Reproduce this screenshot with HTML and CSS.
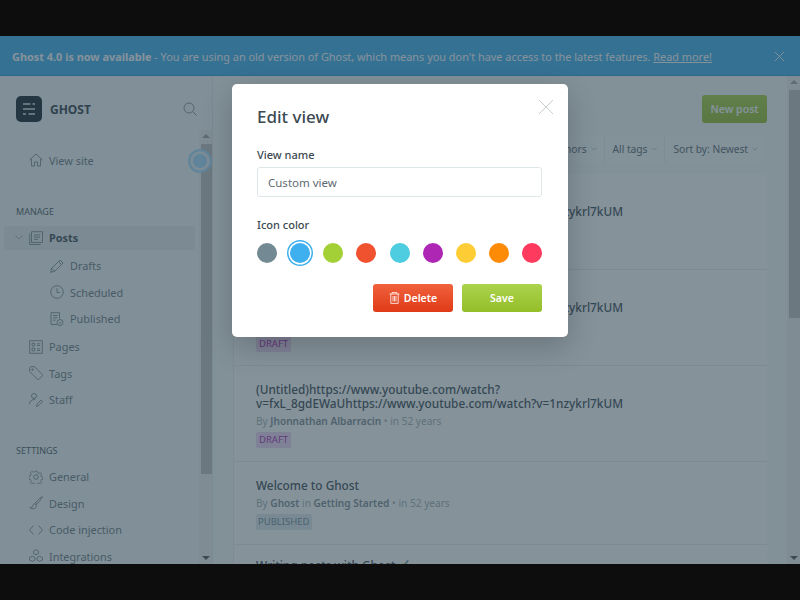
FILE: index.html
```html
<!DOCTYPE html>
<html lang="en">

<head>
    <meta charset="UTF-8">
    <meta name="viewport" content="width=device-width, initial-scale=1.0">
    <title>Edit view</title>
    <link rel="stylesheet" href="styles.css">
</head>

<body>
    <div class="app">
        <div class="banner">
            <p class="banner-text"><strong>Ghost 4.0 is now available</strong> - You are using an old version of Ghost, which means you don't have access to the latest features. <a href="#">Read more!</a></p>
            <svg class="banner-close" viewBox="0 0 12 12"><path d="M1 1l10 10M11 1L1 11"/></svg>
        </div>

        <div class="workspace">
            <aside class="sidebar">
                <div class="brand">
                    <div class="brand-logo">
                        <svg viewBox="0 0 26 26"><path d="M7 8h7.500M16.500 8h2.500M7 13h12M7 18h3M12.500 18h6.500"/></svg>
                    </div>
                    <span class="brand-name">GHOST</span>
                    <svg class="icon search" viewBox="0 0 14 14"><circle cx="6" cy="6" r="5"/><path d="M9.600 9.600L13.500 13.500"/></svg>
                </div>
                <div class="side-body">
                    <nav class="side-nav">
                        <a class="nav-item" href="#">
                            <svg class="icon" viewBox="0 0 14 14"><path d="M.5 7L7 1l6.500 6M2.500 6v7h3V9h3v4h3V6"/></svg>
                            View site
                        </a>
                        <h4 class="nav-title nav-title-manage">MANAGE</h4>
                        <a class="nav-item nav-active" href="#">
                            <svg class="chevron" viewBox="0 0 8 5"><path d="M.5.5L4 4 7.500.5"/></svg>
                            <svg class="icon" viewBox="0 0 14 14"><path d="M2.500.7h11v10.800h-11zM.7 2.500v11h11M5 4h6M5 6.200h6M5 8.400h4"/></svg>
                            Posts
                        </a>
                        <a class="nav-item nav-sub" href="#">
                            <svg class="icon" viewBox="0 0 14 14"><path d="M.7 13.300l1-4L10 1l3 3-8.300 8.300zM1.700 9.300l3 3M8.500 2.500l3 3"/></svg>
                            Drafts
                        </a>
                        <a class="nav-item nav-sub" href="#">
                            <svg class="icon" viewBox="0 0 14 14"><circle cx="7" cy="7" r="6.300"/><path d="M7 3.200V7.500H10"/></svg>
                            Scheduled
                        </a>
                        <a class="nav-item nav-sub nav-sub-last" href="#">
                            <svg class="icon" viewBox="0 0 14 14"><path d="M7 12.500H1V.7h8.500v5.800M3 3.500h4.500M3 5.800h4.500M3 8.100h2.500"/><circle cx="10" cy="10.500" r="3"/><path d="M8.800 10.500l1 1 1.500-1.800"/></svg>
                            Published
                        </a>
                        <a class="nav-item" href="#">
                            <svg class="icon" viewBox="0 0 14 14"><path d="M.7.7h12.600v12.600H.7zM3 3.200h2.800v2.600H3zM3 8.200h2.800v2.600H3zM8 3.800h3.200M8 5.500h3.200M8 8.800h3.200M8 10.500h3.200"/></svg>
                            Pages
                        </a>
                        <a class="nav-item" href="#">
                            <svg class="icon" viewBox="0 0 14 14"><path d="M.7 1.500l.8-.8h4L13.300 8.500a1 1 0 010 1.400L9.900 13.300a1 1 0 01-1.400 0L.7 5.500z"/><circle cx="3.600" cy="3.600" r=".8"/></svg>
                            Tags
                        </a>
                        <a class="nav-item" href="#">
                            <svg class="icon" viewBox="0 0 14 14"><circle cx="5" cy="3" r="2.500"/><path d="M.5 11c0-3 2-4.500 5.500-4.500M7.500 13.500l.6-2.500 4-4 1.600 1.500-4 4z"/></svg>
                            Staff
                        </a>
                        <h4 class="nav-title nav-title-settings">SETTINGS</h4>
                        <a class="nav-item" href="#">
                            <svg class="icon" viewBox="0 0 14 14"><circle cx="7" cy="7" r="2.300"/><path d="M5.800.6h2.400l.4 1.800 1.400.6 1.600-1 1.700 1.700-1 1.600.6 1.400 1.800.4v2.400l-1.800.4-.6 1.400 1 1.600-1.700 1.700-1.600-1-1.400.6-.4 1.800H5.800l-.4-1.800-1.400-.6-1.600 1-1.700-1.700 1-1.600-.6-1.400-1.800-.4V5.800l1.800-.4.600-1.400-1-1.600 1.700-1.700 1.600 1 1.400-.6z" transform="translate(.7 .7) scale(.9)"/></svg>
                            General
                        </a>
                        <a class="nav-item" href="#">
                            <svg class="icon" viewBox="0 0 14 14"><path d="M13.300.7c-1.500.5-5 3.500-7 6.500l1.500 1.200C10 6 12.800 2.200 13.300.7zM6 7.800c-1.800 0-2 1.200-2.300 2.400-.3 1-1.500 1.300-2.700 1.300 1 1.600 5 2.200 6.200-1 .3-1-.2-2.400-1.200-2.700z"/></svg>
                            Design
                        </a>
                        <a class="nav-item" href="#">
                            <svg class="icon" viewBox="0 0 14 14"><path d="M4.500 2.500L.5 7l4 4.500M9.500 2.500l4 4.500-4 4.500"/></svg>
                            Code injection
                        </a>
                        <a class="nav-item" href="#">
                            <svg class="icon" viewBox="0 0 14 14"><path d="M7 .6l2.400 1.300v2.600L7 5.800 4.600 4.500V1.900zM3.500 7.200l2.400 1.300v2.600l-2.400 1.300-2.900-1.300V8.500zM10.500 7.200l2.900 1.300v2.600l-2.900 1.300-2.400-1.300V8.500z"/></svg>
                            Integrations
                        </a>
                    </nav>
                    <div class="scrollbar scrollbar-side">
                        <span class="arrow arrow-up"></span>
                        <div class="thumb thumb-side"></div>
                        <span class="arrow arrow-down"></span>
                    </div>
                    <span class="pulse"></span>
                </div>
            </aside>

            <main class="content">
                <div class="content-inner">
                    <div class="page-head">
                        <a class="btn-new" href="#">New post</a>
                    </div>
                    <div class="filters">
                        <div class="filter-bar">
                            <span class="filter">All posts <svg class="chevron" viewBox="0 0 8 5"><path d="M.5.5L4 4 7.500.5"/></svg></span>
                            <span class="filter">All access <svg class="chevron" viewBox="0 0 8 5"><path d="M.5.5L4 4 7.500.5"/></svg></span>
                            <span class="filter">All authors <svg class="chevron" viewBox="0 0 8 5"><path d="M.5.5L4 4 7.500.5"/></svg></span>
                            <span class="filter">All tags <svg class="chevron" viewBox="0 0 8 5"><path d="M.5.5L4 4 7.500.5"/></svg></span>
                            <span class="filter">Sort by: Newest <svg class="chevron" viewBox="0 0 8 5"><path d="M.5.5L4 4 7.500.5"/></svg></span>
                        </div>
                    </div>
                    <div class="post-list">
                        <div class="post">
                            <h3 class="post-title">(Untitled)https://www.youtube.com/watch?v=fxL_8gdEWaUhttps://www.youtube.com/watch?v=1nzykrl7kUM</h3>
                            <p class="post-meta">By <b>Jhonnathan Albarracin</b> • in 52 years</p>
                            <span class="tag tag-draft">DRAFT</span>
                        </div>
                        <div class="post">
                            <h3 class="post-title">(Untitled)https://www.youtube.com/watch?v=fxL_8gdEWaUhttps://www.youtube.com/watch?v=1nzykrl7kUM</h3>
                            <p class="post-meta">By <b>Jhonnathan Albarracin</b> • in 52 years</p>
                            <span class="tag tag-draft">DRAFT</span>
                        </div>
                        <div class="post">
                            <h3 class="post-title">(Untitled)https://www.youtube.com/watch?v=fxL_8gdEWaUhttps://www.youtube.com/watch?v=1nzykrl7kUM</h3>
                            <p class="post-meta">By <b>Jhonnathan Albarracin</b> • in 52 years</p>
                            <span class="tag tag-draft">DRAFT</span>
                        </div>
                        <div class="post">
                            <h3 class="post-title">Welcome to Ghost</h3>
                            <p class="post-meta">By <b>Ghost</b> in <b>Getting Started</b> • in 52 years</p>
                            <span class="tag tag-published">PUBLISHED</span>
                        </div>
                        <div class="post">
                            <h3 class="post-title">Writing posts with Ghost ✍️</h3>
                        </div>
                    </div>
                </div>
                <div class="scrollbar scrollbar-main">
                    <span class="arrow arrow-up"></span>
                    <div class="thumb thumb-main"></div>
                    <span class="arrow arrow-down"></span>
                </div>
            </main>
        </div>

        <div class="overlay">
            <div class="modal">
                <svg class="modal-close" viewBox="0 0 14 14"><path d="M0 0l14 14M14 0L0 14"/></svg>
                <h2>Edit view</h2>
                <label class="field-label" for="viewName">View name</label>
                <input class="field-input" id="viewName" type="text" value="Custom view">
                <label class="field-label label-color">Icon color</label>
                <div class="swatches">
                    <span class="swatch swatch-slate"></span>
                    <span class="swatch swatch-blue selected"></span>
                    <span class="swatch swatch-green"></span>
                    <span class="swatch swatch-red"></span>
                    <span class="swatch swatch-teal"></span>
                    <span class="swatch swatch-purple"></span>
                    <span class="swatch swatch-yellow"></span>
                    <span class="swatch swatch-orange"></span>
                    <span class="swatch swatch-pink"></span>
                </div>
                <div class="modal-actions">
                    <a class="btn btn-delete" href="#">
                        <svg viewBox="0 0 11 12"><path d="M.5 2h10M3 2V.6h5V2M1.800 2v9.400h7.400V2M4 4v5.500M5.500 4v5.500M7 4v5.500"/></svg>
                        Delete
                    </a>
                    <a class="btn btn-save" href="#">Save</a>
                </div>
            </div>
        </div>
    </div>
</body>

</html>
```

FILE: styles.css
```css
* {
    box-sizing: border-box;
}

body {
    font-family: "Noto Sans", "Open Sans", sans-serif;
    margin: 0;
    padding: 36px 0;
    height: 600px;
    background-color: #0d0d0d;
    overflow: hidden;
    color: #3c4a52;
}

a {
    text-decoration: none;
    color: inherit;
}

.app {
    position: relative;
    height: 528px;
    overflow: hidden;
    background-color: #f8f9fa;
    display: flex;
    flex-direction: column;
}

.banner {
    height: 40px;
    flex: none;
    display: flex;
    align-items: center;
    justify-content: space-between;
    padding: 1px 15px 0 12px;
    background-color: #3eb0ef;
    border-bottom: 1px solid #2a9de0;
    color: #fff;
    font-size: 10.900px;
}

.banner-text {
    margin: 0;
    white-space: nowrap;
}

.banner-text a {
    text-decoration: underline;
}

.banner-close {
    width: 11px;
    height: 11px;
    fill: none;
    stroke: #fff;
    stroke-width: 1;
}

.workspace {
    flex: 1;
    display: flex;
    min-height: 0;
}

.sidebar {
    width: 213px;
    flex: none;
    display: flex;
    flex-direction: column;
    background-color: #f6f8f9;
    border-right: 1px solid #e6eaec;
}

.brand {
    height: 54px;
    flex: none;
    display: flex;
    align-items: center;
    padding: 12px 15px 0 16px;
}

.brand-logo {
    width: 26px;
    height: 26px;
    border-radius: 5px;
    background-color: #15212a;
}

.brand-logo svg {
    display: block;
    fill: none;
    stroke: #dfe4e6;
    stroke-width: 1.700;
}

.brand-name {
    margin-left: 8px;
    font-size: 12px;
    font-weight: 700;
    flex: 1;
    color: #2f3d45;
}

.icon {
    width: 14px;
    height: 14px;
    flex: none;
    fill: none;
    stroke: #6b7a82;
    stroke-width: .8;
}

.side-body {
    position: relative;
    flex: 1;
    display: flex;
    min-height: 0;
}

.side-nav {
    flex: 1;
    padding: 17px 4px 0;
    overflow: hidden;
}

.nav-item {
    display: flex;
    align-items: center;
    gap: 6px;
    height: 26.500px;
    padding-left: 25px;
    font-size: 10.900px;
    color: #6b7a82;
    white-space: nowrap;
}

.nav-active {
    padding-left: 11px;
    height: 24px;
    margin-bottom: 3px;
    border-radius: 4px;
    background-color: #e6ebed;
    font-weight: 700;
    color: #3c4a52;
}

.nav-sub {
    padding-left: 46px;
}

.nav-sub-last {
    margin-bottom: 1.500px;
}

.nav-title {
    margin: 0;
    padding-left: 12px;
    font-size: 9px;
    line-height: 12px;
    font-weight: 400;
    color: #4a5860;
}

.nav-title-manage {
    margin: 32px 0 8px;
}

.nav-title-settings {
    margin: 31.500px 0 7px;
}

.chevron {
    width: 8px;
    height: 5px;
    flex: none;
    fill: none;
    stroke: #9aa6ac;
    stroke-width: .8;
}

.scrollbar {
    width: 13px;
    flex: none;
    display: flex;
    flex-direction: column;
    align-items: flex-end;
    background-color: #f1f1f1;
    padding: 4px 0;
}

.arrow {
    width: 0;
    height: 0;
    flex: none;
    margin-right: 2px;
    border-left: 4px solid transparent;
    border-right: 4px solid transparent;
}

.arrow-up {
    border-bottom: 4px solid #a3a3a3;
    margin-bottom: 6px;
}

.arrow-down {
    border-top: 4px solid #505050;
    margin-top: auto;
}

.thumb {
    width: 11px;
    flex: none;
    background-color: #c1c1c1;
}

.thumb-side {
    height: 330px;
}

.thumb-main {
    height: 228px;
}

.pulse {
    position: absolute;
    top: 19px;
    left: 188px;
    width: 24px;
    height: 24px;
    border-radius: 50%;
    background-color: #a5dcff;
    border: 2px solid #a5dcff;
    box-shadow: inset 0 0 0 3px #e8f0f4;
}

.content {
    flex: 1;
    min-width: 0;
    display: flex;
}

.content-inner {
    flex: 1;
    min-width: 0;
    padding: 19px 20px 0 20px;
    overflow: hidden;
}

.page-head {
    display: flex;
    justify-content: flex-end;
    height: 41px;
}

.btn-new {
    width: 65px;
    height: 28px;
    display: flex;
    align-items: center;
    justify-content: center;
    border-radius: 3px;
    background: linear-gradient(#a6d140, #94be29);
    color: #fff;
    font-size: 10.500px;
    font-weight: 600;
}

.filters {
    display: flex;
    justify-content: flex-end;
    padding-right: 2px;
    height: 38px;
}

.filter-bar {
    height: 26px;
    display: flex;
    border-radius: 3px;
    background-color: #fbfcfc;
}

.filter {
    display: flex;
    align-items: center;
    gap: 4px;
    padding: 0 7px 0 8px;
    font-size: 10.200px;
    color: #5a6870;
    white-space: nowrap;
    border-left: 1px solid #eceff0;
}

.filter .chevron {
    width: 6px;
    height: 4px;
}

.post-list {
    border-radius: 4px 4px 0 0;
    background-color: #fff;
    border-left: 1px solid #eceff0;
}

.post {
    height: 96px;
    padding: 16px 22px 0;
    overflow: hidden;
    border-bottom: 1px solid #e8ecee;
}

.post:nth-child(4) {
    height: 83px;
    padding-top: 16px;
}

.post:nth-child(5) {
    padding-top: 13px;
}

.post-title {
    margin: 0;
    font-size: 11.800px;
    line-height: 14px;
    font-weight: 500;
    color: #3c4a52;
    overflow-wrap: anywhere;
}

.post-meta {
    margin: 4px 0 4px;
    font-size: 10.100px;
    line-height: 14px;
    color: #a4aeb3;
}

.post-meta b {
    font-weight: 600;
    color: #7d8a91;
}

.tag {
    display: block;
    width: fit-content;
    height: 16px;
    line-height: 16px;
    border-radius: 2px;
    font-size: 9.500px;
}

.tag-draft {
    padding: 0 3px;
    background-color: #f0d9f4;
    color: #ad26b4;
}

.tag-published {
    padding: 0 2px;
    background-color: #dfeaef;
    color: #738a94;
}

.overlay {
    position: absolute;
    top: 0;
    left: 0;
    right: 0;
    bottom: 0;
    display: flex;
    justify-content: center;
    align-items: flex-start;
    padding-top: 48px;
    background-color: rgba(48, 70, 84, 0.59);
}

.modal {
    position: relative;
    width: 336px;
    height: 253px;
    padding: 22px 26px 0 25px;
    border-radius: 5px;
    background-color: #fff;
    box-shadow: 0 10px 30px rgba(0, 0, 0, 0.2);
}

.modal-close {
    position: absolute;
    top: 16px;
    right: 15px;
    width: 14px;
    height: 14px;
    fill: none;
    stroke: #b0b8bc;
    stroke-width: .7;
}

.modal h2 {
    margin: 0 0 20px;
    font-size: 17px;
    line-height: 22px;
    font-weight: 500;
    color: #3c4a52;
}

.field-label {
    display: block;
    font-size: 11px;
    line-height: 14px;
    font-weight: 500;
    color: #3c4a52;
    margin-bottom: 5px;
}

.field-input {
    display: block;
    width: 100%;
    height: 30px;
    padding: 0 10px;
    border: 1px solid #dfe6ea;
    border-radius: 3px;
    font-family: inherit;
    font-size: 11.500px;
    color: #5d6a72;
}

.label-color {
    margin-top: 21px;
    margin-bottom: 0;
}

.swatches {
    display: flex;
    justify-content: space-between;
    margin-top: 11px;
}

.swatch {
    width: 20px;
    height: 20px;
    border-radius: 50%;
}

.swatch-slate { background-color: #738a94; }
.swatch-blue { background-color: #3eb0ef; }
.swatch-green { background-color: #a4d037; }
.swatch-red { background-color: #f05230; }
.swatch-teal { background-color: #4dcddf; }
.swatch-purple { background-color: #ad26b4; }
.swatch-yellow { background-color: #fecd35; }
.swatch-orange { background-color: #fe8b05; }
.swatch-pink { background-color: #fe3b5e; }

.swatch.selected {
    box-shadow: 0 0 0 1.500px #fff, 0 0 0 3px #3eb0ef;
}

.modal-actions {
    display: flex;
    justify-content: flex-end;
    gap: 9px;
    margin-top: 21px;
}

.btn {
    width: 80px;
    height: 28px;
    display: flex;
    align-items: center;
    justify-content: center;
    gap: 4px;
    border-radius: 3px;
    color: #fff;
    font-size: 10.500px;
    font-weight: 600;
}

.btn svg {
    width: 11px;
    height: 12px;
    fill: none;
    stroke: #fff;
    stroke-width: .8;
}

.btn-delete {
    background: linear-gradient(#f0623d, #e03a17);
}

.btn-save {
    background: linear-gradient(#abd34d, #94be29);
}
```
